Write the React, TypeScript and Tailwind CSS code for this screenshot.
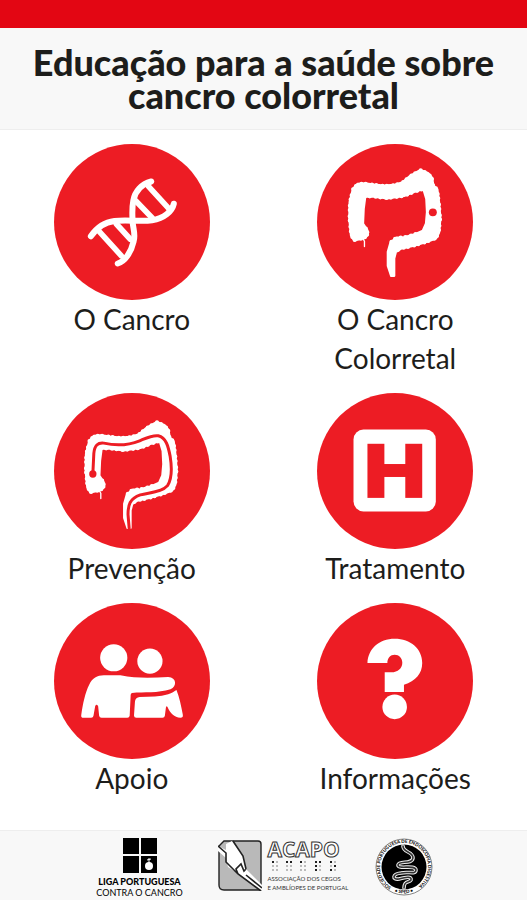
import type { ReactNode } from "react";

const COLON =
  "M160 146L182 144L210 148L240 151L270 149L296 141L320 121L350 104L372 113L384 127L388 150L400 162L405 200L409 250L405 292L396 309L370 319L330 331L290 340L275 350L270 370L270 422L262 422L252 392L252 350L260 322L277 308L300 307L335 297L357 287L367 265L370 230L368 190L359 160L330 169L300 181L250 188L210 183L183 182L178 220L176 265L189 285L191 299L180 308L150 315L141 300L136 250L137 200L147 160Z";

function Colon() {
  return (
    <g fill="#fff" stroke="#fff" strokeLinecap="round" strokeLinejoin="round">
      <path d={COLON} strokeWidth="8" />
      <path
        d="M270 350L290 340L330 331L370 319L396 309L405 292L409 250L405 200L400 162L388 150L384 127L372 113L350 104L320 121L296 141L270 149L240 151L210 148L182 144L160 146L147 160L137 200L136 250L141 300L150 315L180 308L191 299L189 285L176 265"
        fill="none"
        strokeWidth="12"
        strokeDasharray="0 13 0 19"
      />
      <path
        d="M183 182L210 183L250 188L300 181L330 169L359 160M335 297L300 307L277 308L260 322"
        fill="none"
        strokeWidth="13"
        strokeDasharray="0 14 0 18"
      />
      <path d="M175 308L181 318L181 334" fill="none" strokeWidth="4" />
    </g>
  );
}

function Disc({ children }: { children: ReactNode }) {
  return (
    <svg viewBox="0 0 470 470" className="size-39" aria-hidden="true">
      <circle cx="235" cy="235" r="235" fill="#ed1c24" />
      {children}
    </svg>
  );
}

const topics: { label: string; icon: ReactNode }[] = [
  {
    label: "O Cancro",
    icon: (
      <g transform="translate(-40 -25)" fill="none" stroke="#fff" strokeLinecap="round">
        <path
          d="M333 138C303 146 284 168 279 195C274 220 276 240 277 262C279 282 286 298 280 318C272 352 254 378 232 385"
          strokeWidth="18"
        />
        <path
          d="M151 303C170 275 195 260 222 257C262 252 300 260 335 255C372 248 396 228 401 205"
          strokeWidth="18"
        />
        <path d="M176 288L243 362M228 266L270 312M286 196L336 248M324 152L386 220" strokeWidth="17" />
      </g>
    ),
  },
  {
    label: "O Cancro Colorretal",
    icon: (
      <g transform="translate(-38 -25)">
        <Colon />
        <circle cx="387" cy="231" r="12" fill="#ed1c24" />
      </g>
    ),
  },
  {
    label: "Prevenção",
    icon: (
      <g transform="translate(-40 -24)">
        <g transform="translate(0 8)">
          <Colon />
        </g>
        <circle cx="157" cy="268" r="11" fill="#ed1c24" />
        <path
          d="M157 268L160 206C162 182 172 173 190 175C230 184 268 180 298 168C322 158 338 150 354 153C378 159 384 184 390 215C397 258 394 284 382 303C366 322 332 323 300 331C268 342 263 362 263 390L267 438"
          fill="none"
          stroke="#ed1c24"
          strokeWidth="9"
        />
      </g>
    ),
  },
  {
    label: "Tratamento",
    icon: (
      <g transform="translate(-38 -24)">
        <rect x="148" y="134" width="248" height="247" rx="30" fill="#fff" />
        <g fill="#ed1c24">
          <rect x="190" y="177" width="51" height="163" />
          <rect x="304" y="177" width="51" height="163" />
          <rect x="230" y="238" width="84" height="39" />
        </g>
      </g>
    ),
  },
  {
    label: "Apoio",
    icon: (
      <g transform="translate(-40 -22)" fill="#fff">
        <circle cx="220" cy="187" r="41" />
        <circle cx="329" cy="197" r="38" />
        <path d="M122 360C127 325 134 292 146 268C156 248 170 240 190 240H240C290 250 335 248 384 245C410 246 411 273 391 282C352 294 312 290 275 293Q271 294 271 299L268 362Q267 368 261 368H183Q177 368 176 362L173 333Q168 324 164 333L159 362Q158 368 152 368H129Q121 368 122 360Z" />
        <path d="M281 361L284 318Q286 306 298 305C330 305 360 304 384 297C396 293 402 288 409 284C418 306 423 332 428 358Q430 368 421 368C402 365 390 354 382 335Q378 330 377 338L374 362Q373 368 367 368H288Q281 368 281 361Z" />
      </g>
    ),
  },
  {
    label: "Informações",
    icon: (
      <g transform="translate(-38 -22)" fill="#fff">
        <path d="M190 203C192 160 225 130 272 130C320 130 355 160 355 203C355 235 335 258 300 268V290H242V231H262C282 231 295 218 295 202C295 188 285 178 272 178C259 178 250 188 250 203Z" />
        <circle cx="272" cy="335" r="37" />
      </g>
    ),
  },
];

function LigaLogo() {
  return (
    <div className="flex w-[90px] flex-col items-center whitespace-nowrap text-black">
      <svg viewBox="0 0 34 35" className="h-[35px] w-[34px]" aria-hidden="true">
        <path d="M0 0h16v16H0zM18 0h16v16H18zM0 18h16v17H0zM18 18h16v17H18z" />
        <circle cx="26" cy="28" r="4" fill="#fff" />
        <path d="M26 27V20M24 22l4-1" stroke="#fff" strokeWidth="1" fill="none" />
      </svg>
      <span className="mt-[3px] text-[9px] leading-[11px] font-black">LIGA PORTUGUESA</span>
      <span className="text-[9px] leading-[11px]">CONTRA O CANCRO</span>
    </div>
  );
}

function AcapoLogo() {
  return (
    <div className="flex gap-1.5">
      <svg viewBox="0 0 44 51" className="mt-0.5 h-[51px] w-11" aria-hidden="true">
        <path d="M6 1H40Q43 1 43 4V50H6Q1 50 1 45V6Z" fill="#b9b9b9" stroke="#222" strokeWidth="1.4" />
        <path
          d="M0 6L8 10V4L14 1L25 16L28 29L44 45V51L20 33L10 27L8 18L0 11Z"
          fill="#fff"
        />
        <path
          d="M0 6L8 13V22L20 34L43 51M15 1L25 16L28 29M20 34L18 29L23 24L26 31L28 29M28 35L44 48"
          fill="none"
          stroke="#222"
          strokeWidth="1.6"
        />
      </svg>
      <div className="flex w-[74px] flex-col whitespace-nowrap text-[#333]">
        <span className="font-['Open_Sans','Noto_Sans',sans-serif] text-[21px] leading-[22px] font-bold text-white [-webkit-text-stroke:1px_#333]">
          ACAPO
        </span>
        <svg viewBox="0 0 74 12" className="h-3 w-[74px]" aria-hidden="true">
          <g fill="#bbb">
            {[4, 18, 32, 47, 62].map((x) => (
              <path key={x} d={`M${x} 1h2v2h-2zM${x + 4} 1h2v2h-2zM${x} 5h2v2h-2zM${x + 4} 5h2v2h-2zM${x} 9h2v2h-2zM${x + 4} 9h2v2h-2z`} />
            ))}
          </g>
          <path
            d="M4 1h2v2h-2zM18 1h2v2h-2zM22 1h2v2h-2zM32 1h2v2h-2zM47 1h2v2h-2zM51 1h2v2h-2zM47 5h2v2h-2zM47 9h2v2h-2zM62 1h2v2h-2zM66 5h2v2h-2zM62 9h2v2h-2z"
            fill="#222"
          />
        </svg>
        <span className="mt-0.5 text-[6px] leading-[9px]">ASSOCIAÇÃO DOS CEGOS</span>
        <span className="text-[6px] leading-[9px]">E AMBLÍOPES DE PORTUGAL</span>
      </div>
    </div>
  );
}

function SpedLogo() {
  return (
    <svg viewBox="0 0 58 58" className="size-[58px]" role="img" aria-label="SPED">
      <defs>
        <path id="ring" d="M16.3 49.2A24 24 0 1 1 41.7 49.2" />
        <path id="ringBottom" d="M17 52.5A26.4 26.4 0 0 0 41 52.5" />
      </defs>
      <circle cx="29" cy="29" r="28" fill="#fff" stroke="#666" strokeWidth="0.8" />
      <circle cx="29" cy="29" r="22.5" />
      <text fontSize="4.6" fontWeight="900" fill="#111">
        <textPath href="#ring">SOCIEDADE PORTUGUESA DE ENDOSCOPIA DIGESTIVA</textPath>
      </text>
      <text fontSize="4.6" fontWeight="900" fill="#111" textAnchor="middle">
        <textPath href="#ringBottom" startOffset="50%">
          • SPED •
        </textPath>
      </text>
      <g fill="none" strokeLinecap="round" strokeLinejoin="round">
        <path
          d="M28 8C28 15 38 13 38 20C37 27 24 22 23 27C23 32 40 26 41 32C41 37 33 33 26 35C17 36 17 42 24 41C31 39 37 38 36 42C34 45 29 42 29 50"
          stroke="#eee"
          strokeWidth="3.6"
        />
        <path
          d="M28 8C28 15 38 13 38 20C37 27 24 22 23 27C23 32 40 26 41 32C41 37 33 33 26 35C17 36 17 42 24 41C31 39 37 38 36 42C34 45 29 42 29 50"
          stroke="#333"
          strokeWidth="1.6"
        />
      </g>
    </svg>
  );
}

export default function App() {
  return (
    <div className="flex min-h-screen flex-col bg-white font-[Lato,'Noto_Sans',sans-serif] text-[#1d1d1b]">
      <div className="h-7 bg-[#e30613]" />
      <header className="border-b border-[#eeeeee] bg-[#f8f8f8] px-5 pt-[18px] pb-[17px]">
        <h1 className="text-center text-[36px] leading-[33px] font-black">
          Educação para a saúde sobre cancro colorretal
        </h1>
      </header>
      <main className="flex-1 pt-3.5 pb-8">
        <nav className="grid grid-cols-2 gap-y-[15px]">
          {topics.map((topic) => (
            <a key={topic.label} href="#" className="flex flex-col items-center">
              <Disc>{topic.icon}</Disc>
              <span className="max-w-40 text-center text-[28px] leading-[39px]">{topic.label}</span>
            </a>
          ))}
        </nav>
      </main>
      <footer className="flex justify-center gap-[33px] border-t border-[#eeeeee] bg-[#f8f8f8] pt-[7px] pb-1">
        <LigaLogo />
        <AcapoLogo />
        <SpedLogo />
      </footer>
    </div>
  );
}
